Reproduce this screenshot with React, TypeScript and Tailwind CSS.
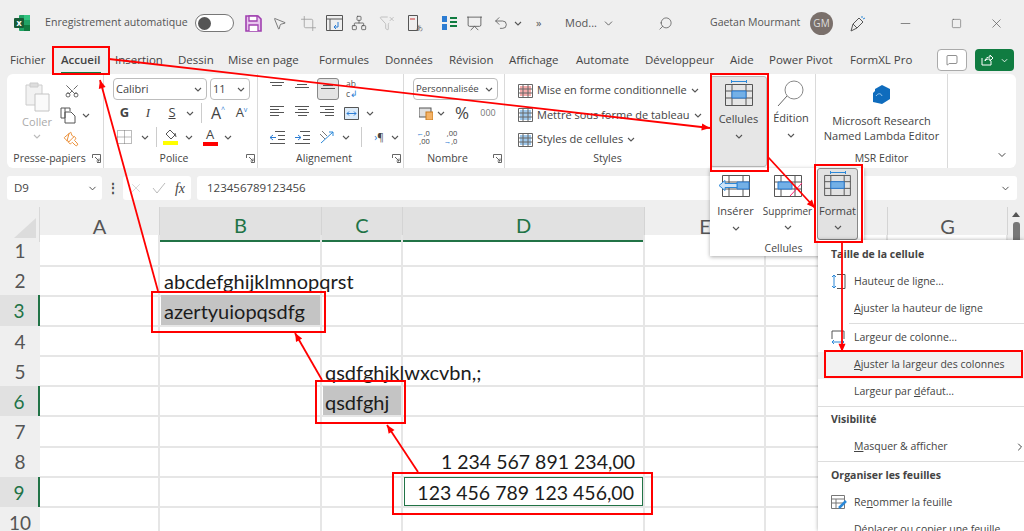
import { ReactNode } from 'react';
import clsx from 'clsx';
import { ChevronDown, ChevronRight, Crop, FunnelX, MessageSquare, Minus, MousePointer2, Network, Paintbrush, Presentation, Scissors, Search, Square, Undo2, X } from 'lucide-react';

const Chev = ({ className }: { className?: string }) => (
  <svg width="8" height="5" viewBox="0 0 8 5" className={clsx('flex-none', className)}>
    <path d="M1 1l3 3 3-3" fill="none" stroke="#555" strokeWidth="1.1" />
  </svg>
);

const Slot = ({ w, children, className }: { w: string; children?: ReactNode; className?: string }) => (
  <span className={clsx('flex flex-none items-center justify-center', w, className)}>{children}</span>
);

const Launcher = () => (
  <svg width="9" height="9" viewBox="0 0 9 9" className="flex-none">
    <path d="M.5 4V.5H8.5V8.5H5M3 3l4 4M7 4.5V7H4.5" fill="none" stroke="#666" strokeWidth="1" />
  </svg>
);

const Lines = ({ rows }: { rows: [number, number][] }) => (
  <svg width="15" height="14" viewBox="0 0 15 14">
    {rows.map(([x, w], i) => (
      <rect key={i} x={x} y={i * 3} width={w} height="1" fill="#555" />
    ))}
  </svg>
);

const TableIcon = ({ w = 28, h = 22, children }: { w?: number; h?: number; children?: ReactNode }) => (
  <svg width={w} height={h} viewBox="0 0 28 22" className="overflow-visible">
    <path d="M.5.5h27v21H.5zM.5 7h27M.5 14h27M7 .5v21M21 .5v21" fill="none" stroke="#555" strokeWidth="1" />
    {children ?? (
      <path d="M7 7h14v7H7z" fill="#74b0e6" stroke="#2b7cd3" strokeWidth="1" />
    )}
  </svg>
);

const Combo = ({ w, label, size, className }: { w: string; label: string; size: string; className?: string }) => (
  <div className={clsx('flex h-[22px] items-center justify-between rounded-[4px] border border-[#bdbdbd] bg-white pl-[2px] pr-[4px] text-[#444]', w, size, className)}>
    <span>{label}</span>
    <Chev />
  </div>
);

const Group = ({ w, label, launcher, pad, children }: { w: string; label: string; launcher?: boolean; pad?: string; children: ReactNode }) => (
  <div className={clsx('flex flex-none flex-col border-r border-[#dadada] pt-[4px]', w)}>
    <div className="h-[73px] flex-none">{children}</div>
    <div className={clsx('relative flex h-[16px] items-center justify-center text-[10.5px] text-[#444]', pad)}>
      {label}
      {launcher && (
        <span className="absolute right-[2px] top-[3px]">
          <Launcher />
        </span>
      )}
    </div>
  </div>
);

const Row = ({ children, className }: { children: ReactNode; className?: string }) => (
  <div className={clsx('flex h-[22px] items-center', className)}>{children}</div>
);

const tabs: [string, string][] = [
  ['Fichier', 'w-[51px]'],
  ['Accueil', 'w-[54px]'],
  ['Insertion', 'w-[63px]'],
  ['Dessin', 'w-[50px]'],
  ['Mise en page', 'w-[91px]'],
  ['Formules', 'w-[66px]'],
  ['Données', 'w-[64px]'],
  ['Révision', 'w-[60px]'],
  ['Affichage', 'w-[67px]'],
  ['Automate', 'w-[69px]'],
  ['Développeur', 'w-[85px]'],
  ['Aide', 'w-[39px]'],
  ['Power Pivot', 'w-[81px]'],
  ['FormXL Pro', 'w-[70px]'],
];

const TitleBar = () => (
  <div className="flex h-[46px] flex-none items-center text-[#555]">
    <svg width="16" height="16" viewBox="0 0 16 16" className="ml-[14px] flex-none">
      <rect x="5" y="0" width="11" height="16" rx="1" fill="#21a366" />
      <rect x="10" y="0" width="6" height="5" fill="#33c481" />
      <rect x="10" y="10" width="6" height="6" fill="#107c41" />
      <rect x="0" y="3" width="10" height="10" rx="1" fill="#185c37" />
      <text x="5" y="11" textAnchor="middle" fontSize="9" fontWeight="700" fill="#fff">x</text>
    </svg>
    <span className="ml-[15px] w-[142px] flex-none whitespace-nowrap text-[10.6px]">Enregistrement automatique</span>
    <div className="ml-[8px] flex h-[18px] w-[39px] flex-none items-center rounded-full border border-[#777] bg-white pl-[2px]">
      <span className="h-[13px] w-[13px] rounded-full bg-[#555]" />
    </div>
    <svg width="17" height="17" viewBox="0 0 17 17" className="ml-[11px] flex-none">
      <path d="M1 1h12l3 3v12H1z" fill="#e8c6ee" stroke="#a040b0" strokeWidth="1.6" />
      <path d="M4 1h8v5H4zM4 16v-6h9v6" fill="#fff" stroke="#a040b0" strokeWidth="1.3" />
    </svg>
    <Slot w="w-[29px]" className="ml-[3px]"><MousePointer2 size={15} strokeWidth={1.2} /></Slot>
    <Slot w="w-[27px]" className="ml-[1px]"><Crop size={17} strokeWidth={1.1} className="text-[#999]" /></Slot>
    <svg width="17" height="16" viewBox="0 0 17 16" className="ml-[4px] flex-none">
      <path d="M.5.5h16v15H.5zM.5 4h16M4 4v11" fill="none" stroke="#555" />
      <path d="M12 7v5H8M10 10l-2 2 2 2" fill="none" stroke="#2b7cd3" />
    </svg>
    <Slot w="w-[28px]" className="ml-[2px]"><Network size={16} strokeWidth={1.2} /></Slot>
    <Slot w="w-[28px]"><FunnelX size={16} strokeWidth={1} className="text-[#aaa]" /></Slot>
    <svg width="15" height="17" viewBox="0 0 15 17" className="ml-[7px] flex-none">
      <path d="M.5.5h9v15H.5z" fill="none" stroke="#555" />
      <path d="M2 4h5" stroke="#c33" />
      <text x="8" y="15" fontSize="7" fill="#666">あ</text>
    </svg>
    <svg width="17" height="16" viewBox="0 0 17 16" className="ml-[18px] flex-none">
      <path d="M1 1h5v6H1zM1 9h5v6H1z" fill="#2b7cd3" />
      <path d="M9 3h7M9 7h7M9 11h7" stroke="#107c41" strokeWidth="2" />
    </svg>
    <Slot w="w-[28px]" className="ml-[2px]"><Presentation size={17} strokeWidth={1.2} /></Slot>
    <Slot w="w-[26px]"><Undo2 size={16} strokeWidth={1.2} /></Slot>
    <Chev className="mr-[14px]" />
    <span className="w-[15px] flex-none text-[11px]">»</span>
    <span className="ml-[14px] w-[36px] flex-none text-[11px]">Mod...</span>
    <ChevronDown size={13} strokeWidth={1.6} className="ml-[1px] flex-none" />
    <Search size={15} strokeWidth={1.2} className="ml-[43px] flex-none -scale-x-100" />
    <span className="ml-[37px] w-[92px] flex-none whitespace-nowrap text-[10.5px]">Gaetan Mourmant</span>
    <div className="ml-[8px] flex h-[23px] w-[23px] flex-none items-center justify-center rounded-full bg-[#7a706b] text-[10px] text-[#ddd]">GM</div>
    <svg width="16" height="17" viewBox="0 0 16 17" className="ml-[17px] flex-none">
      <path d="M1 16l2-7 6-6 4 4-6 6zM3 9l4 4" fill="none" stroke="#555" />
      <path d="M12 1v2M15 3l-2 1" stroke="#2b88d8" />
    </svg>
    <Minus size={15} strokeWidth={1.1} className="ml-[32px] flex-none" />
    <Square size={11} strokeWidth={1.2} className="ml-[38px] flex-none" />
    <X size={15} strokeWidth={1.1} className="ml-[27px] flex-none" />
  </div>
);

const TabBar = () => (
  <div className="flex h-[28px] flex-none items-center pl-[10px] text-[11.5px] text-[#444]">
    {tabs.map(([t, w]) => (
      <span key={t} className={clsx('relative flex-none whitespace-nowrap', w, t === 'Accueil' && 'font-semibold')}>
        {t}
        {t === 'Accueil' && <span className="absolute left-0 top-[21px] h-[2px] w-[40px] bg-[#107c41]" />}
      </span>
    ))}
    <div className="ml-[17px] flex h-[22px] w-[30px] flex-none items-center justify-center rounded-[4px] border border-[#aaa] bg-white">
      <MessageSquare size={12} strokeWidth={1.2} />
    </div>
    <div className="ml-[8px] flex h-[22px] w-[39px] flex-none items-center justify-center gap-[7px] rounded-[4px] bg-[#107c41]">
      <svg width="13" height="12" viewBox="0 0 13 12"><path d="M1 4v7h9V7M4 7c0-3 3-4 5-4V1l3 3-3 3V5c-2 0-4 0-5 2z" fill="none" stroke="#fff" /></svg>
      <svg width="7" height="5" viewBox="0 0 8 5"><path d="M1 1l3 3 3-3" fill="none" stroke="#fff" /></svg>
    </div>
  </div>
);

const Ribbon = () => (
  <div className="mx-[7px] flex h-[94px] w-[1009px] flex-none rounded-[6px] bg-white pl-[4px] text-[#444]">
    <Group w="w-[93px]" label="Presse-papiers" launcher pad="pr-[15px]">
      <div className="flex">
        <div className="flex w-[48px] flex-none flex-col items-center pl-[4px] pt-[4px]">
          <svg width="26" height="30" viewBox="0 0 26 30">
            <path d="M2 3h16v20H2z" fill="#f2f2f2" stroke="#ccc" />
            <path d="M6 1h8v4H6z" fill="#ddd" stroke="#ccc" />
            <path d="M11 12h14v17H11z" fill="#fafafa" stroke="#c4c4c4" />
          </svg>
          <span className="mt-[2px] text-[11px] text-[#aaa]">Coller</span>
          <Chev className="mt-[3px] opacity-40" />
        </div>
        <div className="flex flex-col pl-[1px]">
          <Row className="mt-[2px]"><Scissors size={16} strokeWidth={1.2} className="ml-[4px] -rotate-90 text-[#444]" /></Row>
          <Row className="mt-[2px]">
            <svg width="16" height="17" viewBox="0 0 16 17"><path d="M5 1h5v3M5 1v10H1V1zM5 5h6l4 4v7H5z" fill="none" stroke="#555" /></svg>
            <Chev className="ml-[6px]" />
          </Row>
          <Row className="mt-[2px]"><Paintbrush size={16} strokeWidth={1.4} className="ml-[3px] rotate-90 text-[#e8892c]" /></Row>
        </div>
      </div>
    </Group>
    <Group w="w-[154px]" label="Police" launcher pad="pr-[13px]">
      <div className="flex flex-col gap-[2px] pl-[9px]">
        <Row>
          <Combo w="w-[94px]" label="Calibri" size="text-[11px]" />
          <Combo w="w-[40px]" label="11" size="text-[11px]" className="ml-[3px]" />
        </Row>
        <Row className="text-[13px]">
          <Slot w="w-[23px]" className="font-bold">G</Slot>
          <Slot w="w-[24px]" className="font-['Liberation_Serif',serif] italic">I</Slot>
          <Slot w="w-[24px]" className="underline">S</Slot>
          <Slot w="w-[12px]"><Chev /></Slot>
          <Slot w="w-[11px]"><span className="h-[20px] w-px bg-[#ccc]" /></Slot>
          <Slot w="w-[22px]" className="text-[16px]">A<sup className="text-[7px] text-[#2b7cd3]">^</sup></Slot>
          <Slot w="w-[25px]" className="text-[13px]">A<sup className="text-[7px] text-[#2b7cd3]">v</sup></Slot>
        </Row>
        <Row>
          <Slot w="w-[22px]">
            <svg width="15" height="14" viewBox="0 0 15 14"><path d="M.5.5h14v13H.5zM7.5.5v13M.5 7h14" fill="none" stroke="#777" strokeDasharray="1 1" /></svg>
          </Slot>
          <Slot w="w-[14px]" className="ml-[3px]"><Chev /></Slot>
          <Slot w="w-[9px]"><span className="h-[20px] w-px bg-[#ccc]" /></Slot>
          <div className="flex w-[18px] flex-none flex-col items-center">
            <svg width="13" height="11" viewBox="0 0 13 11"><path d="M6 1l5 5-4 4-5-5zM11 4l1 4" fill="none" stroke="#555" /></svg>
            <span className="mt-[1px] h-[4px] w-[15px] bg-[#ffff00]" />
          </div>
          <Slot w="w-[14px]" className="ml-[3px]"><Chev /></Slot>
          <div className="ml-[6px] flex w-[16px] flex-none flex-col items-center text-[13px] leading-[13px]">
            A
            <span className="mt-[1px] h-[4px] w-[15px] bg-[#ff0000]" />
          </div>
          <Slot w="w-[20px]"><Chev /></Slot>
        </Row>
      </div>
    </Group>
    <Group w="w-[146px]" label="Alignement" launcher pad="pr-[13px]">
      <div className="flex flex-col gap-[2px] pl-[9px]">
        <Row>
          <Slot w="w-[20px]"><Lines rows={[[0, 14], [2, 10]]} /></Slot>
          <Slot w="w-[5px]" />
          <Slot w="w-[20px]"><div className="pt-[4px]"><Lines rows={[[2, 10], [0, 14]]} /></div></Slot>
          <Slot w="w-[5px]" />
          <Slot w="w-[22px]" className="h-[22px] rounded-[3px] border border-[#888] bg-[#e4e4e4]"><div className="pt-[6px]"><Lines rows={[[2, 10], [0, 14]]} /></div></Slot>
          <Slot w="w-[26px]" className="text-[8.5px] leading-[10px] text-[#555]"><span>ab<br />c<span className="text-[#2b7cd3]">↲</span></span></Slot>
        </Row>
        <Row>
          <Slot w="w-[20px]"><Lines rows={[[0, 14], [0, 9], [0, 14], [0, 9]]} /></Slot>
          <Slot w="w-[5px]" />
          <Slot w="w-[20px]"><Lines rows={[[0, 14], [3, 9], [0, 14], [3, 9]]} /></Slot>
          <Slot w="w-[5px]" />
          <Slot w="w-[20px]"><Lines rows={[[0, 14], [5, 9], [0, 14], [5, 9]]} /></Slot>
          <Slot w="w-[28px]">
            <svg width="15" height="13" viewBox="0 0 15 13"><path d="M.5.5h14v12H.5z" fill="#dcebf9" stroke="#555" /><path d="M3 6.5h9M5 4.5l-2 2 2 2M10 4.5l2 2-2 2" fill="none" stroke="#2b7cd3" /></svg>
          </Slot>
          <Slot w="w-[10px]"><Chev /></Slot>
        </Row>
        <Row>
          <Slot w="w-[20px]">
            <svg width="15" height="13" viewBox="0 0 15 13"><path d="M5 .5h10M8 4.5h7M8 8.5h7M0 12.5h15" fill="none" stroke="#555" /><path d="M6 6.5H0M3 4l-3 2.5L3 9" fill="none" stroke="#2b7cd3" /></svg>
          </Slot>
          <Slot w="w-[5px]" />
          <Slot w="w-[20px]">
            <svg width="15" height="13" viewBox="0 0 15 13"><path d="M5 .5h10M8 4.5h7M8 8.5h7M0 12.5h15" fill="none" stroke="#555" /><path d="M0 6.5h6M3 4l3 2.5L3 9" fill="none" stroke="#2b7cd3" /></svg>
          </Slot>
          <Slot w="w-[28px]" className="ml-[1px]">
            <svg width="17" height="15" viewBox="0 0 17 15"><path d="M2 13L14 2M14 2h-4M14 2v4" fill="none" stroke="#2b88d8" /><path d="M3 1l5 5M1 4l5 5" stroke="#777" /></svg>
          </Slot>
          <Slot w="w-[10px]"><Chev /></Slot>
          <Slot w="w-[17px]" className="ml-[2px]"><span className="h-[20px] w-px bg-[#ccc]" /></Slot>
          <Slot w="w-[18px]" className="text-[10px]"><span className="text-[#2b7cd3]">›</span>¶</Slot>
          <Slot w="w-[14px]"><Chev /></Slot>
        </Row>
      </div>
    </Group>
    <Group w="w-[101px]" label="Nombre" launcher pad="pr-[13px]">
      <div className="flex flex-col gap-[2px] pl-[9px]">
        <Combo w="w-[85px]" label="Personnalisée" size="text-[9.6px]" />
        <Row>
          <Slot w="w-[14px]" className="ml-[6px]">
            <svg width="14" height="14" viewBox="0 0 14 14"><rect y="2" width="12" height="9" fill="#e0e0e0" stroke="#555" /><rect x="7" y="6" width="7" height="8" fill="#f4b266" stroke="#c87a1d" /></svg>
          </Slot>
          <Slot w="w-[14px]" className="ml-[1px]"><Chev /></Slot>
          <Slot w="w-[26px]" className="ml-[1px] text-[17px]">%</Slot>
          <Slot w="w-[24px]" className="ml-[1px] text-[9px] text-[#777]">000</Slot>
        </Row>
        <Row className="text-[7.5px] leading-[8px]">
          <Slot w="w-[20px]"><span className="text-right"><span className="text-[#2b7cd3]">←</span>,0<br />,00</span></Slot>
          <Slot w="w-[25px]" className="ml-[5px]"><span className="text-right">,00<br /><span className="text-[#2b7cd3]">→</span>,0</span></Slot>
        </Row>
      </div>
    </Group>
    <div className="flex w-[205px] flex-none flex-col pt-[4px]">
      <div className="flex h-[73px] flex-none flex-col gap-[2.5px] pl-[13px] pt-[1.5px] text-[11px]">
        {[
          ['Mise en forme conditionnelle', '#e44'],
          ['Mettre sous forme de tableau', '#2b88d8'],
          ['Styles de cellules', '#2b88d8'],
        ].map(([t, c]) => (
          <Row key={t} className="gap-[4px]">
            <svg width="15" height="14" viewBox="0 0 15 14">
              <rect x="2" y="2" width="11" height="10" fill={c} opacity="0.45" />
              <path d="M.5.5h14v13H.5zM.5 5h14M.5 9h14M5 .5v13M10 .5v13" fill="none" stroke="#666" />
            </svg>
            <span className="whitespace-nowrap">{t}</span>
            <Chev />
          </Row>
        ))}
      </div>
      <div className="flex h-[16px] items-center justify-center text-[10.5px]">Styles</div>
    </div>
    <div className="mt-[2px] mb-[1px] flex w-[57px] flex-none flex-col items-center rounded-[3px] border border-[#bbb] bg-[#e6e6e6] pt-[3px] text-[11px]">
      <span className="mb-[1px] h-[3px] w-[16px] border-x border-[#2b88d8] bg-[linear-gradient(#0000_1px,#2b88d8_1px,#2b88d8_2px,#0000_2px)]" />
      <TableIcon />
      <span className="mt-[5px]">Cellules</span>
      <Chev className="mt-[6px]" />
    </div>
    <div className="flex w-[49px] flex-none flex-col items-center border-r border-[#dadada] pt-[6px] text-[11px]">
      <svg width="28" height="27" viewBox="0 0 28 27"><circle cx="17" cy="10" r="9" fill="#fff" stroke="#888" /><path d="M10 16L1 26" stroke="#666" /></svg>
      <span className="mt-[3px]">Édition</span>
      <Chev className="mt-[6px]" />
    </div>
    <Group w="w-[132px]" label="MSR Editor">
      <div className="flex flex-col items-center pt-[7px] text-center text-[11px] leading-[15px]">
        <svg width="18" height="19" viewBox="0 0 18 19"><path d="M9 0l8 4v10l-8 5-9-2V8l2-2V4z" fill="#0f6cbd" /><path d="M3 11c2-3 5-3 6 0" fill="none" stroke="#9cc9ee" /></svg>
        <span className="mt-[9px]">Microsoft Research</span>
        <span>Named Lambda Editor</span>
      </div>
    </Group>
    <div className="flex flex-1 items-end justify-end pb-[7px] pr-[8px]">
      <ChevronDown size={12} strokeWidth={2} />
    </div>
  </div>
);

const FormulaBar = () => (
  <div className="mt-[8px] flex h-[24px] flex-none items-stretch px-[7px] text-[11.5px] text-[#444]">
    <div className="flex w-[95px] flex-none items-center justify-between rounded-[3px] bg-white pl-[7px] pr-[4px]">
      D9
      <ChevronDown size={11} strokeWidth={2} />
    </div>
    <div className="flex w-[21px] flex-none items-center justify-center text-[12px] font-bold">⋮</div>
    <div className="flex w-[68px] flex-none items-center justify-between rounded-[3px] bg-white px-[6px]">
      <X size={14} strokeWidth={1} className="text-[#bbb]" />
      <svg width="14" height="12" viewBox="0 0 14 12"><path d="M1 6l4 5 8-10" fill="none" stroke="#bbb" /></svg>
      <span className="font-['Liberation_Serif',serif] text-[14px] italic">fx</span>
    </div>
    <div className="ml-[6px] flex flex-1 items-center justify-between rounded-[3px] bg-white pl-[10px] pr-[6px]">
      123456789123456
      <ChevronDown size={11} strokeWidth={2} />
    </div>
  </div>
);

const gridCols = 'grid grid-cols-[40px_120px_162px_81px_242px_121px_122px_120px]';
const cols = ['A', 'B', 'C', 'D', 'E', 'F', 'G'];
const cellText: Record<string, { text: string; cls: string }> = {
  B2: { text: 'abcdefghijklmnopqrst', cls: 'left-[4px]' },
  B3: { text: 'azertyuiopqsdfg', cls: 'left-[1px] right-0 bg-[#c4c4c4] pl-[3px]' },
  C5: { text: 'qsdfghjklwxcvbn,;', cls: 'left-[3px]' },
  C6: { text: 'qsdfghj', cls: 'left-[1px] right-0 bg-[#c4c4c4] pl-[2px]' },
  D8: { text: '1 234 567 891 234,00', cls: 'right-[8px] text-[19.5px]' },
  D9: { text: '123 456 789 123 456,00', cls: 'left-[1px] right-0 justify-end border border-[#217346] bg-white pr-[8px] text-[19.5px]' },
};

const Sheet = () => (
  <div className="mt-[7px] flex min-h-0 flex-1">
    <div className="flex-none overflow-hidden bg-white">
      <div className={clsx(gridCols, 'h-[28px] bg-[#efefef]')}>
        <div className="relative border-r border-[#d8d8d8]">
          <svg width="22" height="20" viewBox="0 0 22 20" className="absolute bottom-[4px] right-[3px]"><path d="M22 0v20H0z" fill="#dcdcdc" /></svg>
        </div>
        {cols.map(c => {
          const active = c === 'B' || c === 'C' || c === 'D';
          return (
            <div key={c} className={clsx('flex items-center justify-center border-r border-[#d4d4d4] pt-[3px] font-["Lato",sans-serif] text-[20px]', active ? 'border-b-2 border-b-[#217346] bg-[#e1e1e1] text-[#217346]' : 'text-[#555]')}>
              {c}
            </div>
          );
        })}
      </div>
      {Array.from({ length: 10 }, (_, i) => i + 1).map(r => {
        const active = r === 3 || r === 6 || r === 9;
        return (
          <div key={r} className={clsx(gridCols, 'h-[30.2px] font-["Lato",sans-serif]')}>
            <div className={clsx('flex items-center justify-center border-b border-[#dcdcdc] pt-[2px] text-[19px]', active ? 'border-r-2 border-r-[#217346] bg-[#e1e1e1] text-[#217346]' : 'bg-[#efefef] text-[#555]')}>{r}</div>
            {cols.map(c => {
              const cell = cellText[c + r];
              return (
                <div key={c} className="relative border-b-2 border-r-2 border-[#e6e6e6] text-[20px] text-[#1c1c1c]">
                  {cell && (
                    <span className={clsx('absolute inset-y-0 flex items-center whitespace-nowrap pt-[2px]', cell.cls)}>{cell.text}</span>
                  )}
                </div>
              );
            })}
          </div>
        );
      })}
    </div>
    <div className="flex w-[16px] flex-none flex-col items-center bg-[#efefef] pt-[5px]">
      <span className="h-0 w-0 border-x-[4px] border-b-[5px] border-x-transparent border-b-[#555]" />
      <span className="mt-[5px] h-[40px] w-[7px] rounded-[3px] bg-[#777]" />
    </div>
  </div>
);

const CellulesPopup = () => (
  <div className="absolute left-[710px] top-[168px] flex h-[88px] w-[154px] flex-col bg-white text-[11px] text-[#444] shadow-[0_1px_4px_#0005]">
    <div className="flex h-[72px] flex-none">
      <div className="flex w-[51px] flex-none flex-col items-center pt-[7px]">
        <TableIcon>
          <path d="M15 7h12v7H15z" fill="#74b0e6" stroke="#2b7cd3" />
          <path d="M-3 10.5l6-5v3h12v4H3v3z" fill="#cfe4f7" stroke="#2b88d8" />
        </TableIcon>
        <span className="mt-[6px]">Insérer</span>
        <Chev className="mt-[6px]" />
      </div>
      <div className="flex w-[56px] flex-none flex-col items-center pr-[3px] pt-[7px] text-[10px]">
        <TableIcon>
          <path d="M4 7h14v7H4z" fill="#74b0e6" stroke="#2b7cd3" />
          <path d="M16 21L28 8" stroke="#f27" />
        </TableIcon>
        <span className="mt-[7px]">Supprimer</span>
        <Chev className="mt-[6px]" />
      </div>
      <div className="flex h-[72px] w-[41px] flex-none flex-col items-center rounded-[3px] border border-[#888] bg-[#e2e2e2] pt-[2px]">
        <span className="mb-[1px] h-[3px] w-[16px] border-x border-[#2b88d8] bg-[linear-gradient(#0000_1px,#2b88d8_1px,#2b88d8_2px,#0000_2px)]" />
        <TableIcon w={27} h={21} />
        <span className="mt-[7px]">Format</span>
        <Chev className="mt-[5px]" />
      </div>
    </div>
    <div className="flex h-[16px] items-center justify-center pr-[7px] pt-[2px] text-[10.5px]">Cellules</div>
  </div>
);

const MenuHead = ({ children }: { children: ReactNode }) => (
  <div className="flex h-[27px] items-center pl-[13px] font-bold">{children}</div>
);

const MenuItem = ({ icon, children, active, tail }: { icon?: ReactNode; children: ReactNode; active?: boolean; tail?: boolean }) => (
  <div className={clsx('relative flex h-[27px] items-center pl-[36px]', active && 'bg-[#f2f2f2]')}>
    {icon && <span className="absolute left-[13px] top-[5px]">{icon}</span>}
    {children}
    {tail && <ChevronRight size={12} className="absolute right-[-2px]" />}
  </div>
);

const FormatMenu = () => (
  <div className="absolute left-[818px] top-[240px] h-[291px] w-[206px] overflow-hidden bg-white pt-[1.5px] text-[10.5px] text-[#444] shadow-[0_0_4px_#0005]">
    <MenuHead>Taille de la cellule</MenuHead>
    <MenuItem icon={<svg width="15" height="15" viewBox="0 0 15 15"><path d="M6 .5h8v14H6" fill="none" stroke="#555" /><path d="M3 1v13M1 3l2-2 2 2M1 12l2 2 2-2" fill="none" stroke="#2b88d8" /></svg>}>
      <span>Hauteu<u>r</u> de ligne...</span>
    </MenuItem>
    <MenuItem><span><u>A</u>juster la hauteur de ligne</span></MenuItem>
    <div className="mb-[1px] ml-[31px] h-px bg-[#ddd]" />
    <MenuItem icon={<svg width="15" height="15" viewBox="0 0 15 15"><path d="M1 9V1h12v8" fill="none" stroke="#555" /><path d="M1 12h12M3 10l-2 2 2 2M11 10l2 2-2 2" fill="none" stroke="#2b88d8" /></svg>}>
      <span>Largeur de colonne...</span>
    </MenuItem>
    <MenuItem active><span><u>A</u>juster la largeur des colonnes</span></MenuItem>
    <MenuItem><span>Largeur par <u>d</u>éfaut...</span></MenuItem>
    <div className="h-px bg-[#ddd]" />
    <MenuHead>Visibilité</MenuHead>
    <MenuItem tail><span><u>M</u>asquer &amp; afficher</span></MenuItem>
    <div className="mb-[1px] h-px bg-[#ddd]" />
    <MenuHead>Organiser les feuilles</MenuHead>
    <MenuItem icon={<svg width="16" height="15" viewBox="0 0 16 15"><path d="M.5.5h13v13H.5zM.5 4h13M.5 8h13M5 4v10" fill="none" stroke="#777" /><path d="M8 13l7-7" stroke="#2b88d8" strokeWidth="2.5" /></svg>}>
      <span>Re<u>n</u>ommer la feuille</span>
    </MenuItem>
    <MenuItem><span>Déplacer ou copier une feuille</span></MenuItem>
  </div>
);

const Arrow = ({ x1, y1, x2, y2 }: { x1: number; y1: number; x2: number; y2: number }) => {
  const a = Math.atan2(y2 - y1, x2 - x1);
  const len = 9;
  const p = (d: number) => `${x2 - len * Math.cos(a + d)},${y2 - len * Math.sin(a + d)}`;
  return (
    <g>
      <line x1={x1} y1={y1} x2={x2} y2={y2} stroke="#f00" strokeWidth="1.8" />
      <polygon points={`${x2},${y2} ${p(0.4)} ${p(-0.4)}`} fill="#f00" />
    </g>
  );
};

const Box = ({ x, y, x2, y2 }: { x: number; y: number; x2: number; y2: number }) => (
  <rect x={x} y={y} width={x2 - x} height={y2 - y} fill="none" stroke="#f00" strokeWidth="2" />
);

const Annotations = () => (
  <svg width="1024" height="531" viewBox="0 0 1024 531" className="pointer-events-none absolute left-0 top-0">
    <Box x={53} y={47} x2={109} y2={74} />
    <Box x={711} y={74} x2={768} y2={171} />
    <Box x={815} y={165} x2={862} y2={242} />
    <Box x={825} y={351} x2={1022} y2={377} />
    <Box x={152} y={292} x2={325} y2={332} />
    <Box x={316} y={381} x2={405} y2={423} />
    <Box x={393} y={473} x2={652} y2={514} />
    <Arrow x1={109} y1={59} x2={710} y2={128} />
    <Arrow x1={158} y1={291} x2={100} y2={80} />
    <Arrow x1={768} y1={157} x2={815} y2={208} />
    <Arrow x1={842} y1={242} x2={842} y2={352} />
    <Arrow x1={322} y1={380} x2={295} y2={333} />
    <Arrow x1={418} y1={472} x2={387} y2={425} />
  </svg>
);

export default function App() {
  return (
    <div className="relative flex h-[531px] w-[1024px] flex-col overflow-hidden bg-[#efefef] font-['Open_Sans',sans-serif]">
      <TitleBar />
      <TabBar />
      <Ribbon />
      <FormulaBar />
      <Sheet />
      <CellulesPopup />
      <FormatMenu />
      <Annotations />
    </div>
  );
}
